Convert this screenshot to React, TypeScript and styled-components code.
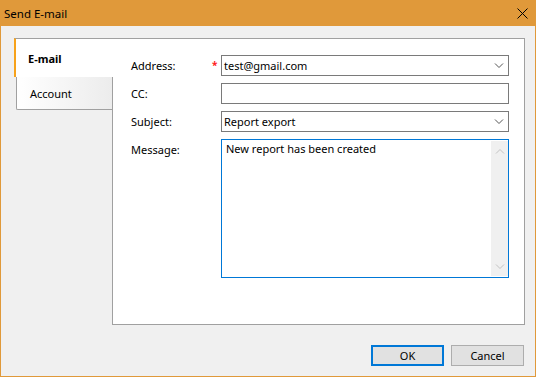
import React from 'react';
import styled, { createGlobalStyle } from 'styled-components';

const GlobalStyle = createGlobalStyle`
    html, body {
        margin: 0;
        padding: 0;
        background: #f0f0f0;
    }
    body {
        font-family: "Noto Sans", "Liberation Sans", sans-serif;
        font-size: 11px;
        color: #000;
    }
`;

const ORANGE = '#e0993a';

const Chevron = ({ up, color = '#555' }: { up?: boolean; color?: string }) => (
    <svg width="10" height="6" viewBox="0 0 10 6">
        <path
            d={up ? 'M1 5.5 L5 1.5 L9 5.5' : 'M1 0.5 L5 4.5 L9 0.5'}
            fill="none"
            stroke={color}
            strokeWidth="1"
        />
    </svg>
);

export default function App() {
    return (
        <>
            <GlobalStyle />
            <Window>
                <TitleBar>
                    <Title>Send E-mail</Title>
                    <CloseButton>
                        <svg width="11" height="11" viewBox="0 0 11 11">
                            <path d="M0.5 0.5 L10.5 10.5 M10.5 0.5 L0.5 10.5" stroke="#000" strokeWidth="1" />
                        </svg>
                    </CloseButton>
                </TitleBar>
                <Body>
                    <Content>
                        <Tabs>
                            <Tab active>E-mail</Tab>
                            <Tab>Account</Tab>
                        </Tabs>
                        <Panel>
                            <Form>
                                <Label>Address:</Label>
                                <Required>*</Required>
                                <Field>
                                    <FieldText>test@gmail.com</FieldText>
                                    <Chevron />
                                </Field>

                                <Label>CC:</Label>
                                <span />
                                <Field />

                                <Label>Subject:</Label>
                                <span />
                                <Field>
                                    <FieldText>Report export</FieldText>
                                    <Chevron />
                                </Field>

                                <Label top>Message:</Label>
                                <span />
                                <MessageBox>
                                    <MessageText>New report has been created</MessageText>
                                    <ScrollBar>
                                        <Chevron up color="#c2c2c2" />
                                        <Chevron color="#c2c2c2" />
                                    </ScrollBar>
                                </MessageBox>
                            </Form>
                        </Panel>
                    </Content>
                    <Footer>
                        <Button primary>OK</Button>
                        <Button>Cancel</Button>
                    </Footer>
                </Body>
            </Window>
        </>
    );
}

const Window = styled.div`
    width: 536px;
    height: 377px;
    box-sizing: border-box;
    display: flex;
    flex-direction: column;
    border: 1px solid ${ORANGE};
    border-top: none;
    background: #f0f0f0;
`;

const TitleBar = styled.div`
    height: 26px;
    margin: 0 -1px;
    background: ${ORANGE};
    display: flex;
    align-items: center;
    justify-content: space-between;
    padding: 0 0 0 4px;
`;

const Title = styled.span`
    font-size: 11.5px;
    color: #000;
`;

const CloseButton = styled.div`
    width: 46px;
    height: 26px;
    display: flex;
    align-items: center;
    justify-content: center;
    margin-right: -9px;
`;

const Body = styled.div`
    flex: 1;
    display: flex;
    flex-direction: column;
    padding: 12px 10px 0 13px;
`;

const Content = styled.div`
    display: flex;
    height: 287px;
`;

const Tabs = styled.div`
    width: 99px;
    margin-right: -1px;
    display: flex;
    flex-direction: column;
    position: relative;
    z-index: 1;
`;

const Tab = styled.div<{ active?: boolean }>`
    box-sizing: border-box;
    display: flex;
    align-items: center;
    ${(p) =>
        p.active
            ? `
        height: 39px;
        padding-left: 12px;
        background: #fff;
        border-top: 1px solid #a0a0a0;
        border-left: 2px solid #f7a21b;
        font-weight: bold;
    `
            : `
        height: 33px;
        margin-left: 2px;
        margin-right: 1px;
        padding-left: 13px;
        background: linear-gradient(to right, #ffffff, #ececec);
        border-left: 1px solid #a0a0a0;
        border-bottom: 1px solid #a0a0a0;
        border-bottom-left-radius: 2px;
    `}
`;

const Panel = styled.div`
    flex: 1;
    background: #fff;
    border: 1px solid #a0a0a0;
    padding: 16px 15px 0 18px;
`;

const Form = styled.div`
    display: grid;
    grid-template-columns: 81px 9px 1fr;
    grid-template-rows: 21px 21px 21px 139px;
    row-gap: 7px;
`;

const Label = styled.div<{ top?: boolean }>`
    display: flex;
    align-items: ${(p) => (p.top ? 'flex-start' : 'center')};
    padding-top: ${(p) => (p.top ? '3px' : '0')};
`;

const Required = styled.span`
    color: #ff2020;
    font-size: 10px;
    font-weight: bold;
    line-height: 1;
    padding-top: 5px;
`;

const Field = styled.div`
    box-sizing: border-box;
    height: 21px;
    border: 1px solid #7a7a7a;
    display: flex;
    align-items: center;
    justify-content: space-between;
    padding: 0 4px 0 2px;
`;

const FieldText = styled.span`
    white-space: nowrap;
`;

const MessageBox = styled.div`
    box-sizing: border-box;
    border: 1px solid #0078d7;
    display: flex;
    padding: 1px 0 1px 4px;
`;

const MessageText = styled.div`
    flex: 1;
    line-height: 16px;
`;

const ScrollBar = styled.div`
    width: 17px;
    background: #f0f0f0;
    display: flex;
    flex-direction: column;
    align-items: center;
    justify-content: space-between;
    padding: 7px 0 6px;
`;

const Footer = styled.div`
    display: flex;
    justify-content: flex-end;
    gap: 7px;
    margin-top: 20px;
    padding-right: 1px;
`;

const Button = styled.div<{ primary?: boolean }>`
    box-sizing: border-box;
    width: 73px;
    height: 21px;
    display: flex;
    align-items: center;
    justify-content: center;
    background: #e1e1e1;
    border: ${(p) => (p.primary ? '2px solid #0078d7' : '1px solid #adadad')};
`;
